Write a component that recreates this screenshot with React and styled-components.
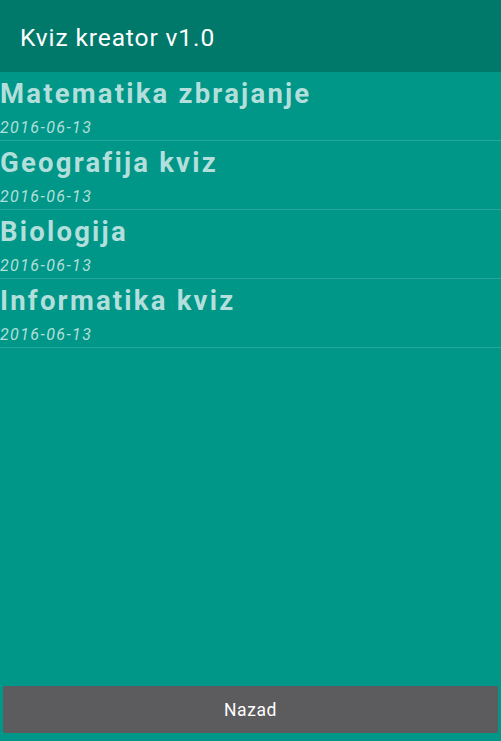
import React from 'react';
import styled, { createGlobalStyle } from 'styled-components';

const GlobalStyle = createGlobalStyle`
  html, body {
    margin: 0;
    padding: 0;
    background: #009688;
  }
  * {
    box-sizing: border-box;
  }
`;

const Screen = styled.div`
  display: flex;
  flex-direction: column;
  height: 100vh;
  background: #009688;
  font-family: Roboto, "Liberation Sans", sans-serif;
`;

const ActionBar = styled.header`
  display: flex;
  align-items: center;
  height: 72px;
  padding: 2px 0 0 20px;
  background: #00796b;
`;

const AppTitle = styled.h1`
  margin: 0;
  font-size: 24.5px;
  font-weight: 400;
  letter-spacing: 0.9px;
  color: #ffffff;
`;

const QuizList = styled.ul`
  flex: 1;
  margin: 0;
  padding: 0;
  list-style: none;
`;

const QuizRow = styled.li`
  display: flex;
  flex-direction: column;
  border-bottom: 1px solid #26a69a;
`;

const QuizName = styled.span`
  font-size: 27.5px;
  font-weight: 700;
  line-height: 43px;
  letter-spacing: 2.2px;
  color: #b2dfdb;
`;

const QuizDate = styled.span`
  font-size: 16px;
  font-style: italic;
  line-height: 25px;
  letter-spacing: 1.4px;
  color: #b2dfdb;
`;

const Footer = styled.div`
  padding: 0 3px 8px 3px;
`;

const BackButton = styled.button`
  width: 100%;
  height: 47px;
  border: none;
  border-radius: 2px;
  background: #5c5b5e;
  color: #ffffff;
  font-family: Roboto, "Liberation Sans", sans-serif;
  font-size: 17.5px;
  letter-spacing: 0.6px;
`;

const quizzes = [
  { name: 'Matematika zbrajanje', date: '2016-06-13' },
  { name: 'Geografija kviz', date: '2016-06-13' },
  { name: 'Biologija', date: '2016-06-13' },
  { name: 'Informatika kviz', date: '2016-06-13' },
];

export default function App() {
  return (
    <Screen>
      <GlobalStyle />
      <ActionBar>
        <AppTitle>Kviz kreator v1.0</AppTitle>
      </ActionBar>
      <QuizList>
        {quizzes.map((q) => (
          <QuizRow key={q.name}>
            <QuizName>{q.name}</QuizName>
            <QuizDate>{q.date}</QuizDate>
          </QuizRow>
        ))}
      </QuizList>
      <Footer>
        <BackButton>Nazad</BackButton>
      </Footer>
    </Screen>
  );
}
